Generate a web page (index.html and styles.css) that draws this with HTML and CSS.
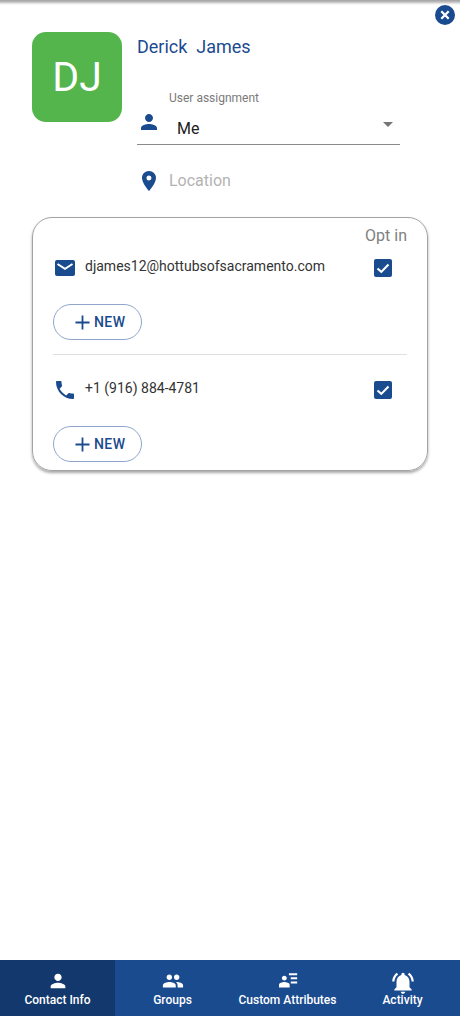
FILE: index.html
```html
<!DOCTYPE html>
<html lang="en">
<head>
<meta charset="utf-8">
<title>Contact</title>
<link rel="stylesheet" href="styles.css">
</head>
<body>
<div class="app">
  <div class="topshade"></div>
  <button class="close" aria-label="Close">
    <svg viewBox="0 0 20 20" width="20" height="20"><circle cx="10" cy="10" r="10" fill="#1b4b8f"/><path d="M6.300 6.300l7.400 7.400M13.700 6.300l-7.400 7.400" stroke="#fff" stroke-width="2.300" fill="none"/></svg>
  </button>
  <main class="main">
    <section class="head">
      <div class="avatar">DJ</div>
      <div class="info">
        <div class="name">Derick&nbsp; James</div>
        <div class="assign">
          <svg class="ic-person" viewBox="0 0 24 24" width="24" height="24"><path fill="#1b4b8f" d="M12 12c2.200 0 4-1.800 4-4s-1.800-4-4-4-4 1.800-4 4 1.800 4 4 4zm0 2c-2.700 0-8 1.300-8 4v2h16v-2c0-2.700-5.300-4-8-4z"/></svg>
          <div class="select">
            <div class="label">User assignment</div>
            <div class="value"><span>Me</span><i class="caret"></i></div>
          </div>
        </div>
        <div class="loc">
          <svg class="ic-pin" viewBox="0 0 24 24" width="24" height="24"><path fill="#1b4b8f" d="M12 2C8.100 2 5 5.100 5 9c0 5.200 7 13 7 13s7-7.800 7-13c0-3.900-3.100-7-7-7zm0 9.500a2.500 2.500 0 1 1 0-5 2.500 2.500 0 0 1 0 5z"/></svg>
          <span>Location</span>
        </div>
      </div>
    </section>
    <section class="card">
      <div class="optin">Opt in</div>
      <div class="row row-mail">
        <svg class="ic-mail" viewBox="0 0 20 16" width="20" height="16"><rect width="20" height="16" rx="2" fill="#1b4b8f"/><path d="M2.500 4l7.500 4.800L17.500 4" stroke="#fff" stroke-width="2" fill="none"/></svg>
        <span class="txt">djames12@hottubsofsacramento.com</span>
        <span class="check"><svg viewBox="0 0 18 18" width="18" height="18"><path d="M3.500 9.500l3.800 3.400L14.500 5.500" stroke="#fff" stroke-width="2.100" fill="none"/></svg></span>
      </div>
      <button class="new"><svg viewBox="0 0 16 16" width="15" height="15"><path d="M8 0.500v15M0.500 8h15" stroke="#1b4b8f" stroke-width="1.900" fill="none"/></svg>NEW</button>
      <hr class="sep">
      <div class="row row-phone">
        <svg class="ic-phone" viewBox="3 3 18 18" width="18" height="18"><path fill="#1b4b8f" d="M6.620 10.790c1.440 2.830 3.760 5.140 6.590 6.590l2.200-2.200c.27-.27.67-.36 1.020-.24 1.120.37 2.330.57 3.570.57.550 0 1 .45 1 1V20c0 .55-.45 1-1 1-9.390 0-17-7.610-17-17 0-.55.450-1 1-1h3.500c.55 0 1 .45 1 1 0 1.250.2 2.450.57 3.570.11.350.03.740-.25 1.020l-2.200 2.200z"/></svg>
        <span class="txt">+1 (916) 884-4781</span>
        <span class="check"><svg viewBox="0 0 18 18" width="18" height="18"><path d="M3.500 9.500l3.800 3.400L14.500 5.500" stroke="#fff" stroke-width="2.100" fill="none"/></svg></span>
      </div>
      <button class="new"><svg viewBox="0 0 16 16" width="15" height="15"><path d="M8 0.500v15M0.500 8h15" stroke="#1b4b8f" stroke-width="1.900" fill="none"/></svg>NEW</button>
    </section>
  </main>
  <nav class="tabs">
    <a class="tab active">
      <svg viewBox="0 0 24 24" width="24" height="24"><path fill="#fff" d="M12 12c2.200 0 4-1.800 4-4s-1.800-4-4-4-4 1.800-4 4 1.800 4 4 4zm0 2c-2.700 0-8 1.300-8 4v2h16v-2c0-2.700-5.300-4-8-4z"/></svg>
      <span>Contact Info</span>
    </a>
    <a class="tab">
      <svg viewBox="0 0 24 24" width="24" height="24"><path fill="#fff" d="M16 11c1.700 0 3-1.300 3-3s-1.300-3-3-3-3 1.300-3 3 1.300 3 3 3zm-8 0c1.700 0 3-1.300 3-3S9.700 5 8 5 5 6.300 5 8s1.300 3 3 3zm0 2c-2.300 0-7 1.200-7 3.500V19h14v-2.500C15 14.200 10.300 13 8 13zm8 0c-.3 0-.6 0-1 .1 1.200.8 2 2 2 3.400V19h6v-2.500c0-2.300-4.700-3.500-7-3.500z"/></svg>
      <span>Groups</span>
    </a>
    <a class="tab">
      <svg viewBox="0 0 24 24" width="24" height="24"><path fill="#fff" d="M8 11.500c1.500 0 2.700-1.200 2.700-2.700S9.500 6.200 8 6.200 5.300 7.300 5.300 8.800 6.500 11.500 8 11.500zm0 1.700c-2 0-5.800 1-5.800 3V19h11.600v-2.800c0-2-3.800-3-5.800-3zM13 3.500h9v2.200h-9zM15 8h7v2.200h-7zM15 12.500h7v2.200h-7z"/></svg>
      <span>Custom Attributes</span>
    </a>
    <a class="tab">
      <svg class="bell" viewBox="0 0 24 24" width="26" height="26"><path fill="#fff" d="M7.580 4.080L6.150 2.650C3.750 4.480 2.170 7.300 2.030 10.500h2c.15-2.650 1.510-4.970 3.550-6.420zm12.390 6.420h2c-.15-3.200-1.730-6.020-4.120-7.850l-1.420 1.430c2.020 1.450 3.390 3.770 3.540 6.420zM18 11c0-3.070-1.640-5.640-4.500-6.320V4c0-.83-.67-1.500-1.500-1.500s-1.500.67-1.500 1.500v.68C7.630 5.360 6 7.920 6 11v5l-2 2v1h16v-1l-2-2v-5zm-6 11c.14 0 .27-.01.4-.04.65-.14 1.180-.58 1.440-1.180.1-.24.15-.5.15-.78h-4c.01 1.100.9 2 2.010 2z"/></svg>
      <span>Activity</span>
    </a>
  </nav>
</div>
</body>
</html>
```
FILE: styles.css
```css
* { box-sizing: border-box; }
html, body { margin: 0; padding: 0; background: #fff; }
body { font-family: Roboto, "Liberation Sans", sans-serif; color: #212121; }
.app { position: relative; width: 460px; height: 1016px; display: flex; flex-direction: column; overflow: hidden; }
.topshade { height: 5px; flex: none; background: linear-gradient(#a0a0a0, #bdbdbd 40%, #e6e6e6 70%, #fff); }
.close { position: absolute; top: 5px; left: 435px; width: 20px; height: 20px; padding: 0; border: 0; background: none; line-height: 0; }
.main { flex: 1; padding: 27px 32px 0; }
.head { display: flex; align-items: flex-start; gap: 15px; }
.avatar { flex: none; width: 90px; height: 90px; border-radius: 14px; background: #54b54c; color: #fff; font-size: 41px; display: flex; align-items: center; justify-content: center; }
.info { flex: none; width: 263px; }
.name { color: #1b4b8f; font-size: 18px; line-height: 30px; height: 30px; }
.assign { display: flex; align-items: flex-start; margin-top: 29px; border-bottom: 1px solid #8a8a8a; height: 54px; }
.ic-person { margin-top: 19px; flex: none; }
.select { flex: 1; padding-left: 8px; }
.label { font-size: 12px; line-height: 14px; color: #7a7a7a; }
.value { display: flex; align-items: center; justify-content: space-between; padding: 0 7px 0 8px; font-size: 16px; line-height: 22px; margin-top: 13px; color: #212121; }
.caret { width: 0; height: 0; border: 5px solid transparent; border-top-color: #757575; border-bottom-width: 0; margin-bottom: 10px; }
.loc { display: flex; align-items: center; gap: 8px; margin-top: 23px; height: 24px; color: #b3b3b3; font-size: 16px; }
.ic-pin { margin-top: 2px; }
.card { margin-top: 25px; width: 396px; height: 254px; border: 1px solid #a3a3a3; border-radius: 20px; box-shadow: 0 2px 3px rgba(0,0,0,.35); padding: 8px 20px 0; }
.optin { text-align: right; color: #808080; font-size: 16px; line-height: 20px; }
.row { display: flex; align-items: center; height: 24px; padding-left: 2px; }
.row-mail { margin-top: 10px; }
.row-phone { margin-top: 23px; }
.row svg { flex: none; }
.ic-mail { margin-right: 1px; }
.ic-phone { margin: 0 2px 0 1px; }
.txt { font-size: 14px; line-height: 18px; margin-left: 9px; flex: 1; margin-top: -4px; color: #333; }
.check { flex: none; width: 18px; height: 18px; border-radius: 2px; background: #1b4b8f; margin-right: 15px; line-height: 0; }
.new { display: flex; align-items: center; justify-content: flex-start; gap: 4px; width: 89px; height: 36px; padding: 0 0 0 21px; background: #fff; border: 1px solid #8ea6cc; border-radius: 18px; color: #1b4b8f; font: 500 14px Roboto, sans-serif; letter-spacing: .4px; margin-top: 24px; }
.sep { border: 0; border-top: 1px solid #e0e0e0; margin: 14px 0 0; }
.tabs { flex: none; height: 56px; display: flex; background: #1b4b8f; }
.tab { flex: 1 1 25%; display: flex; flex-direction: column; align-items: center; justify-content: flex-start; padding-top: 10px; color: #fff; font-size: 12px; font-weight: 500; line-height: 14px; }
.tab svg { display: block; height: 22px; }
.tab svg.bell { height: 26px; margin: -0.500px 0 -3.500px; }
.tab span { margin-top: 1px; }
.tab.active { background: #13386d; }
```
